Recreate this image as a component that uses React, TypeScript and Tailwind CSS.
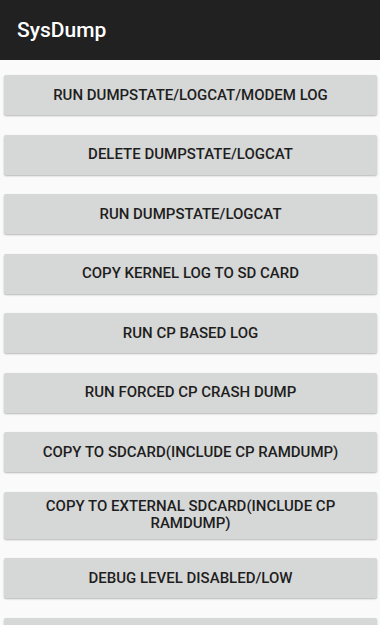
import React from 'react';

const actions = [
  'RUN DUMPSTATE/LOGCAT/MODEM LOG',
  'DELETE DUMPSTATE/LOGCAT',
  'RUN DUMPSTATE/LOGCAT',
  'COPY KERNEL LOG TO SD CARD',
  'RUN CP BASED LOG',
  'RUN FORCED CP CRASH DUMP',
  'COPY TO SDCARD(INCLUDE CP RAMDUMP)',
  'COPY TO EXTERNAL SDCARD(INCLUDE CP RAMDUMP)',
  'DEBUG LEVEL DISABLED/LOW',
  'DEBUG LEVEL ENABLED/MID',
];

export default function App() {
  return (
    <div className="h-[625px] overflow-hidden bg-[#fafafa] font-['Roboto',sans-serif]">
      {/* Toolbar */}
      <div className="h-[60px] bg-[#212121] flex items-center px-[17px]">
        <h1 className="text-[21px] font-medium text-white leading-none">SysDump</h1>
      </div>

      {/* Action buttons */}
      <div className="flex flex-col gap-[19.5px] pt-[15px] px-[4px] pr-[3px]">
        {actions.map((label) => (
          <button
            key={label}
            className="min-h-[40px] py-[6.5px] px-[30px] flex items-center justify-center text-center bg-[#d6d7d7] rounded-[2px] shadow-[0_1px_2px_rgba(0,0,0,0.28)] text-[15px] leading-[17px] font-medium text-[#1e1e1e]"
          >
            {label}
          </button>
        ))}
      </div>
    </div>
  );
}
